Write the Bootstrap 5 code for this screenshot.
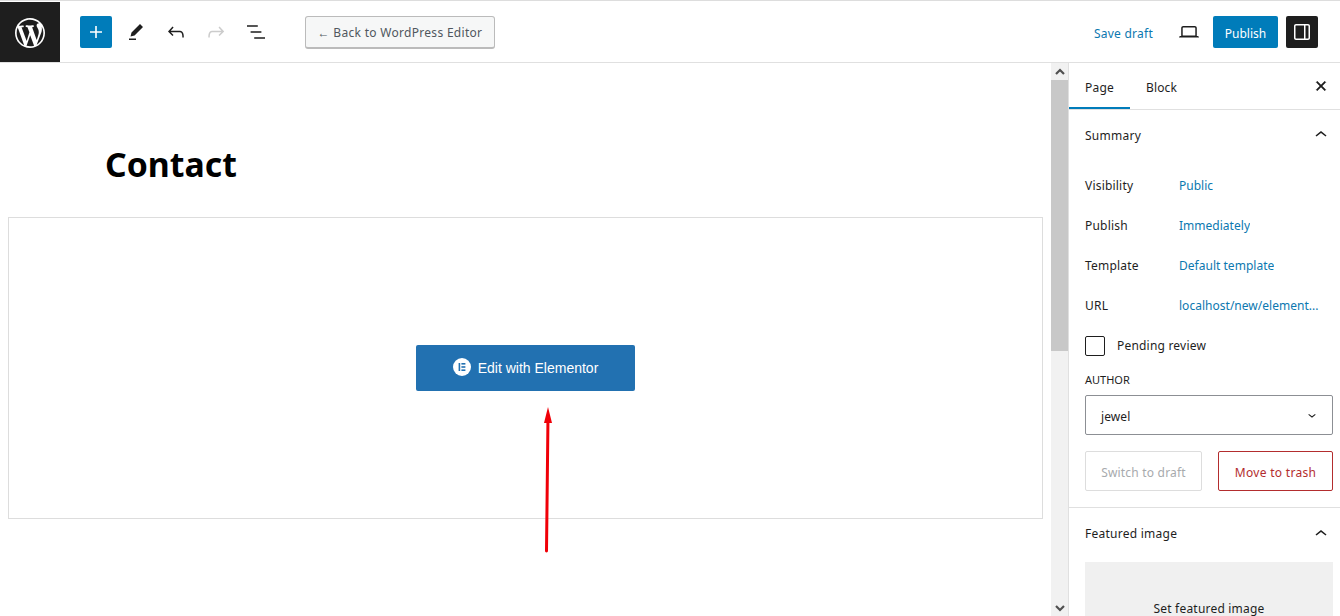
<!DOCTYPE html>
<html lang="en">
<head>
<meta charset="utf-8">
<title>Contact</title>
<link href="https://cdn.jsdelivr.net/npm/bootstrap@5.3.0/dist/css/bootstrap.min.css" rel="stylesheet">
<style>
html,body{height:616px;overflow:hidden;margin:0}
body{font-family:"Noto Sans",sans-serif;font-size:12px;color:#1e1e1e;background:#fff;position:relative;letter-spacing:.1px}
.top-edge{height:2px;background:#fff;border-top:1px solid #ddd}
.wp-header{height:61px;border-bottom:1px solid #e0e0e0}
.wp-logo{width:60px;height:60px;background:#1e1e1e;padding-top:2px}
.wp-logo svg{width:30px;height:30px;fill:#fff}
.ico{width:24px;height:24px;fill:#1e1e1e;display:block}
.ico-btn{width:32px;height:32px;padding:4px;border:0;background:transparent;border-radius:2px;display:flex;flex:none}
.ico-btn.blue{background:#007cba}
.ico-btn.blue .ico{fill:#fff}
.ico-btn.dark{background:#1e1e1e}
.ico-btn.dark .ico{fill:#fff}
.ico-btn.off .ico{fill:#ccc}
.tools{margin-left:20px;gap:8px}
.back-btn{margin-left:33px;height:33px;width:190px;padding:3px 0 0;background:#f6f7f7;border:1px solid #bbb;border-bottom-width:2px;border-radius:3px;font-size:12px;color:#50575e;letter-spacing:.3px}
.save-link{color:#0c78b0;font-size:12px;letter-spacing:.25px;text-decoration:none;margin:4px 20px 0 0}
.pub-btn{width:65px;height:32px;padding:4px 0 0;background:#007cba;color:#fff;font-size:12px;border:0;border-radius:2px;margin:0 8px}
.head-right{margin-right:22px}
.main-area{height:553px}
.canvas{width:1051px;flex:none;height:553px;overflow:hidden}
.post-title{font-size:33.8px;font-weight:700;color:#000;line-height:44px;margin:0;padding:79px 0 0 105px;height:154px;letter-spacing:0}
.el-box{margin-left:8px;width:1035px;height:302px;border:1px solid #ddd}
.el-btn{width:219px;height:46px;background:#2271b1;color:#fff;border-radius:2px;font-family:"Liberation Sans",sans-serif;font-size:14px;border:0;padding:0;gap:7px;letter-spacing:0}
.el-btn svg{width:18px;height:18px;margin-top:-3px}
.sbar{width:17px;flex:none;background:#f1f1f1;height:553px}
.sbar-arrow{height:17px;color:#505050}
.sbar-arrow svg{width:10px;height:10px;fill:none;stroke:#505050;stroke-width:2.2}
.sbar-thumb{height:271px;background:#c8c8c8}
.sbar-space{flex:1}
.side{width:272px;flex:none;border-left:1px solid #e0e0e0;height:553px;overflow:hidden}
.side-tabs{height:47px;border-bottom:1px solid #e0e0e0}
.side-tab{height:46px;padding:0 16px;font-size:12px;color:#1e1e1e;line-height:50px;letter-spacing:.25px}
.side-tab.on{box-shadow:inset 0 -2px 0 #007cba;width:61px}
.side-tab.other{padding:0 0 0 16px;letter-spacing:.15px}
.tab-x{width:24px;height:24px;fill:#1e1e1e;stroke:#1e1e1e;stroke-width:.5;margin:-1px 0 0 auto}
.tab-x-wrap{margin-left:auto;margin-right:7px;height:46px}
.small-ico{width:24px;height:24px;fill:#1e1e1e}
.sec-head{height:50px;padding:0 7px 0 16px;font-size:12px;letter-spacing:.25px}
.sec-head>span{padding-top:2px}
.sec-head.f>span{padding-top:0}
.rows{padding:6px 7px 0 16px}
.meta-row{height:40px;font-size:12px;letter-spacing:.2px}
.meta-label{width:94px;flex:none}
.meta-val{color:#0c78b0;white-space:nowrap;overflow:hidden;letter-spacing:.02px}
.check-box{width:20px;height:20px;border:1px solid #1e1e1e;border-radius:2px;margin-right:12px}
.auth-label{font-size:11px;line-height:15px;margin-top:6px;margin-bottom:8px;letter-spacing:0}
.auth-sel{width:248px;height:40px;border:1px solid #8c8f94;border-radius:2px;padding:0 12px 0 15px;font-size:12px}
.auth-sel span{padding-top:4px}
.auth-sel svg{width:16px;height:16px;fill:#1e1e1e}
.act-row{gap:16px;margin-top:16px;width:248px}
.act-btn{height:40px;padding:3px 0 0;font-size:12px;border-radius:2px;background:#fff;letter-spacing:.2px}
.act-draft{width:117px;border:1px solid #ddd;color:#a7aaad}
.act-trash{width:115px;border:1px solid #b32d2e;color:#b32d2e;letter-spacing:.3px}
.sec-block{border-top:1px solid #e0e0e0;margin-top:16px}
.sec-head.f{height:52px}
.feat-box{margin:2px 0 0 16px;width:248px;height:120px;background:#f0f0f0;text-align:center;font-size:12px;padding-top:38px;letter-spacing:.2px}
.arrow-over{position:absolute;left:530px;top:400px;width:40px;height:160px;pointer-events:none}
</style>
</head>
<body>
<div class="top-edge"></div>
<header class="wp-header d-flex align-items-center">
  <div class="wp-logo d-flex align-items-center justify-content-center flex-none">
    <svg viewBox="0 0 20 20"><path d="M20 10c0-5.51-4.49-10-10-10C4.48 0 0 4.49 0 10c0 5.52 4.48 10 10 10 5.51 0 10-4.48 10-10zM7.78 15.37L4.37 6.22c.55-.02 1.17-.08 1.17-.08.5-.06.44-1.13-.06-1.11 0 0-1.45.11-2.37.11-.18 0-.37 0-.58-.01C4.12 2.69 6.87 1.11 10 1.11c2.33 0 4.45.87 6.05 2.34-.68-.11-1.65.39-1.65 1.58 0 .74.45 1.36.9 2.1.35.61.55 1.36.55 2.46 0 1.49-1.4 5-1.4 5l-3.03-8.37c.54-.02.82-.17.82-.17.5-.05.44-1.25-.06-1.22 0 0-1.44.12-2.38.12-.87 0-2.33-.12-2.33-.12-.5-.03-.56 1.2-.06 1.22l.92.08 1.26 3.41zM17.41 10c.24-.64.74-1.87.43-4.25.7 1.29 1.05 2.71 1.05 4.25 0 3.29-1.73 6.24-4.4 7.78.97-2.59 1.94-5.2 2.92-7.78zM6.1 18.09C3.12 16.65 1.11 13.53 1.11 10c0-1.3.23-2.48.72-3.59C3.25 10.3 4.67 14.2 6.1 18.09zm4.03-6.63l2.58 6.98c-.86.29-1.76.45-2.71.45-.79 0-1.57-.11-2.29-.33.81-2.38 1.62-4.74 2.42-7.1z"/></svg>
  </div>
  <div class="tools d-flex align-items-center">
    <button class="ico-btn blue"><svg class="ico" viewBox="0 0 24 24"><path d="M18 11.2h-5.2V6h-1.6v5.2H6v1.6h5.2V18h1.6v-5.2H18z"/></svg></button>
    <button class="ico-btn"><svg class="ico" viewBox="0 0 24 24"><path d="m19 7-3-3-8.5 8.5-1 4 4-1L19 7Zm-7 11.5H5V20h7v-1.5Z"/></svg></button>
    <button class="ico-btn"><svg class="ico" viewBox="0 0 24 24"><path d="M18.3 11.7c-.6-.6-1.4-.9-2.3-.9H6.7l2.9-3.3-1.1-1-4.5 5L8.5 16l1-1-2.7-2.7H16c.5 0 .9.2 1.3.5 1 1 1 3.4 1 4.5v.3h1.5v-.2c0-1.5 0-4.3-1.5-5.7z"/></svg></button>
    <button class="ico-btn off"><svg class="ico" viewBox="0 0 24 24"><path d="M15.6 6.5l-1.1 1 2.9 3.3H8c-.9 0-1.7.3-2.3.9-1.4 1.5-1.4 4.2-1.4 5.6v.2h1.5v-.3c0-1.1 0-3.5 1-4.5.3-.3.7-.5 1.3-.5h9.2L14.5 15l1.1 1.1 4.6-4.6-4.6-5z"/></svg></button>
    <button class="ico-btn"><svg class="ico" viewBox="0 0 24 24"><path d="M13.8 5.2H3v1.5h10.8V5.2zm-3.6 12v1.5H21v-1.5H10.2zm7.2-6H6.6v1.5h10.8v-1.5z"/></svg></button>
  </div>
  <button class="back-btn">← Back to WordPress Editor</button>
  <div class="head-right ms-auto d-flex align-items-center">
    <a class="save-link" href="#">Save draft</a>
    <button class="ico-btn"><svg class="ico" viewBox="0 0 24 24"><path d="M20.5 16h-.7V8c0-1.1-.9-2-2-2H6.2c-1.1 0-2 .9-2 2v8h-.7c-.8 0-1.5.7-1.5 1.5h20c0-.8-.7-1.5-1.5-1.5zM5.7 8c0-.3.2-.5.5-.5h11.6c.3 0 .5.2.5.5v7.6H5.7V8z"/></svg></button>
    <button class="pub-btn">Publish</button>
    <button class="ico-btn dark"><svg class="ico" viewBox="0 0 24 24"><path d="M18 4H6c-1.1 0-2 .9-2 2v12c0 1.1.9 2 2 2h12c1.1 0 2-.9 2-2V6c0-1.1-.9-2-2-2zm-4 14.5H6c-.3 0-.5-.2-.5-.5V6c0-.3.2-.5.5-.5h8v13zm4.5-.5c0 .3-.2.5-.5.5h-2.5v-13H18c.3 0 .5.2.5.5v12z"/></svg></button>
  </div>
</header>
<main class="main-area d-flex">
  <section class="canvas">
    <h1 class="post-title">Contact</h1>
    <div class="el-box d-flex align-items-center justify-content-center">
      <button class="el-btn d-flex align-items-center justify-content-center">
        <svg viewBox="0 0 18 18"><circle cx="9" cy="9" r="9" fill="#fff"/><rect x="5.6" y="5" width="1.6" height="8" fill="#2271b1"/><rect x="8.4" y="5" width="4" height="1.6" fill="#2271b1"/><rect x="8.4" y="8.2" width="4" height="1.6" fill="#2271b1"/><rect x="8.4" y="11.4" width="4" height="1.6" fill="#2271b1"/></svg>
        <span>Edit with Elementor</span>
      </button>
    </div>
  </section>
  <div class="sbar d-flex flex-column">
    <div class="sbar-arrow d-flex align-items-center justify-content-center"><svg viewBox="0 0 10 10"><path d="M1 7l4-4 4 4"/></svg></div>
    <div class="sbar-thumb"></div>
    <div class="sbar-space"></div>
    <div class="sbar-arrow d-flex align-items-center justify-content-center"><svg viewBox="0 0 10 10"><path d="M1 3l4 4 4-4"/></svg></div>
  </div>
  <aside class="side">
    <div class="side-tabs d-flex">
      <div class="side-tab on">Page</div>
      <div class="side-tab other">Block</div>
      <div class="tab-x-wrap d-flex align-items-center"><svg class="tab-x" viewBox="0 0 24 24"><path d="M12 13.06l3.712 3.713 1.061-1.06L13.061 12l3.712-3.712-1.06-1.06L12 10.938 8.288 7.227l-1.061 1.06L10.939 12l-3.712 3.712 1.06 1.061L12 13.061z"/></svg></div>
    </div>
    <div class="sec-head d-flex align-items-center justify-content-between"><span>Summary</span><svg class="small-ico" viewBox="0 0 24 24"><path d="M6.5 12.4L12 8l5.5 4.4-.9 1.2L12 10l-4.5 3.6-1-1.2z"/></svg></div>
    <div class="rows">
      <div class="meta-row d-flex align-items-center"><span class="meta-label">Visibility</span><span class="meta-val">Public</span></div>
      <div class="meta-row d-flex align-items-center"><span class="meta-label">Publish</span><span class="meta-val">Immediately</span></div>
      <div class="meta-row d-flex align-items-center"><span class="meta-label">Template</span><span class="meta-val">Default template</span></div>
      <div class="meta-row d-flex align-items-center"><span class="meta-label">URL</span><span class="meta-val">localhost/new/element...</span></div>
      <div class="meta-row d-flex align-items-center"><span class="check-box"></span><span>Pending review</span></div>
      <div class="auth-label">AUTHOR</div>
      <div class="auth-sel d-flex align-items-center justify-content-between"><span>jewel</span><svg viewBox="0 0 24 24"><path d="M17.5 11.6L12 16l-5.5-4.4.9-1.2L12 14l4.5-3.6 1 1.2z"/></svg></div>
      <div class="act-row d-flex">
        <button class="act-btn act-draft">Switch to draft</button>
        <button class="act-btn act-trash">Move to trash</button>
      </div>
    </div>
    <div class="sec-block">
      <div class="sec-head f d-flex align-items-center justify-content-between"><span>Featured image</span><svg class="small-ico" viewBox="0 0 24 24"><path d="M6.5 12.4L12 8l5.5 4.4-.9 1.2L12 10l-4.5 3.6-1-1.2z"/></svg></div>
      <div class="feat-box">Set featured image</div>
    </div>
  </aside>
</main>
<svg class="arrow-over" viewBox="0 0 40 160"><path d="M16.5 151L18 16" stroke="#f00008" stroke-width="3" stroke-linecap="round" fill="none"/><path d="M18 7L14 23H22Z" fill="#f00008"/></svg>
</body>
</html>
